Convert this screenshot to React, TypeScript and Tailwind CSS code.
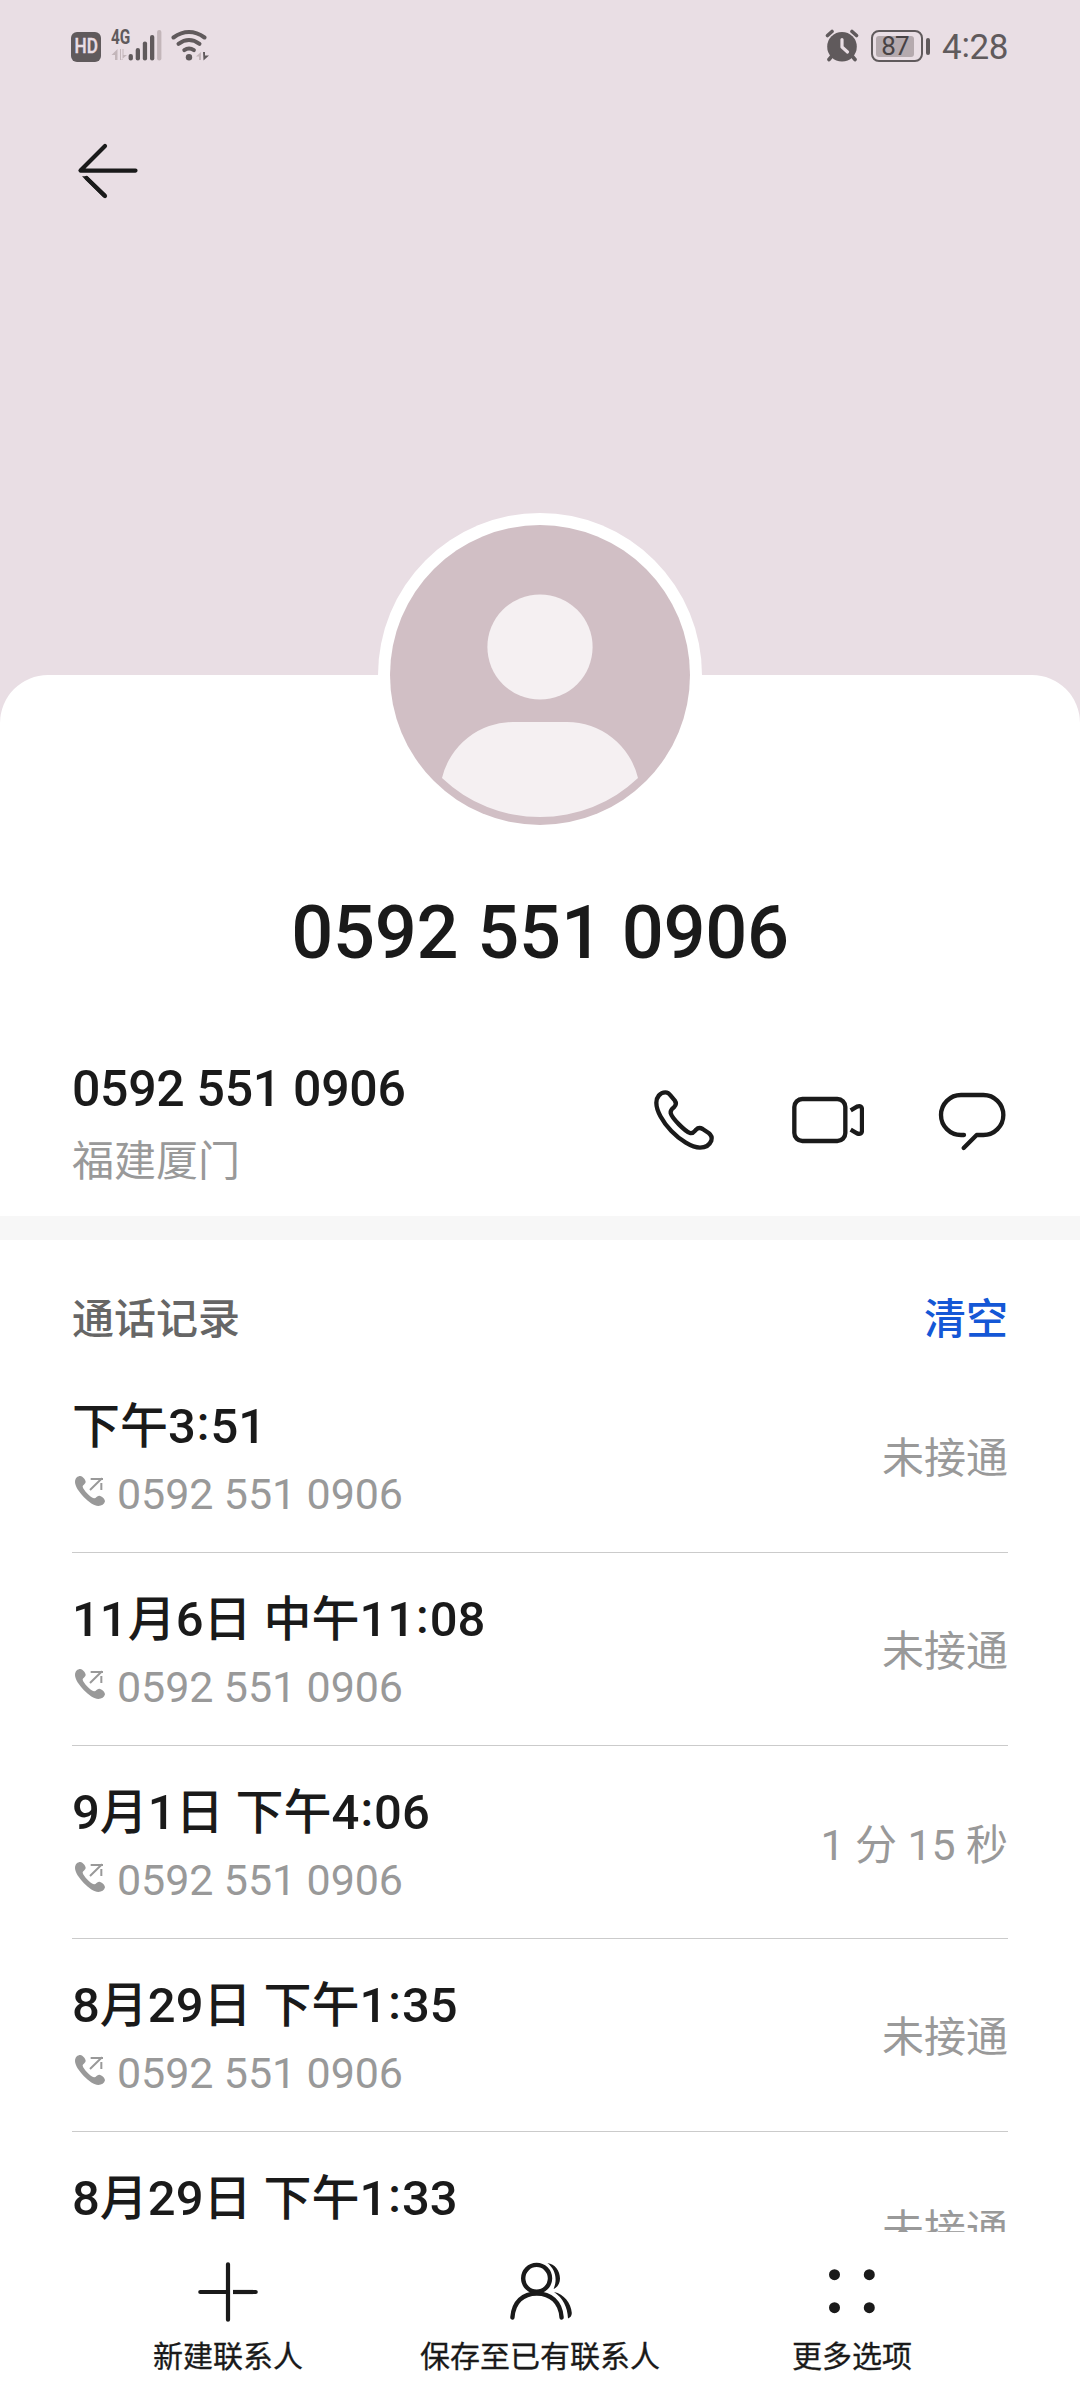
import type { ReactNode } from "react";

const PHONE = "0592 551 0906";

interface CallRecord {
  id: number;
  time: string;
  status: string;
}

const records: CallRecord[] = [
  { id: 1, time: "下午3:51", status: "未接通" },
  { id: 2, time: "11月6日 中午11:08", status: "未接通" },
  { id: 3, time: "9月1日 下午4:06", status: "1 分 15 秒" },
  { id: 4, time: "8月29日 下午1:35", status: "未接通" },
  { id: 5, time: "8月29日 下午1:33", status: "未接通" },
];

// Digits run a little larger than the hanzi, and the colon sits mid-height.
function MixedText({ text }: { text: string }) {
  return (
    <>
      {text.split(/(\d+|:)/).map((part, i) => {
        if (part === ":") {
          return (
            <span key={i} className="relative -top-[3px] px-[1px]">
              :
            </span>
          );
        }
        if (/^\d+$/.test(part)) {
          return (
            <span key={i} className="text-[1.02em]">
              {part}
            </span>
          );
        }
        return <span key={i}>{part}</span>;
      })}
    </>
  );
}

function StatusBar() {
  return (
    <div className="flex h-[92px] items-center justify-between pr-[72px] pl-[71px] text-[#605a5c]">
      <div className="flex items-center">
        <div className="mt-[2px] flex h-[30px] w-[30px] items-center justify-center rounded-[6px] bg-[#605a5c] text-[19.500px] leading-none font-medium text-[#e9dee4]">
          <span className="inline-block scale-x-[0.88] [-webkit-text-stroke:0.4px]">HD</span>
        </div>
        <div className="relative ml-[10px] h-[34px] w-[52px]">
          <span className="absolute top-0 left-0 origin-left scale-x-[0.75] text-[20.500px] leading-[17px] font-bold">
            4G
          </span>
          <svg className="absolute inset-0" width="52" height="34" viewBox="0 0 52 34">
            <path d="M0.500 26 6.500 20v11H4V26zM9 20h2.500v11H9zM10 20v11l6-5h-3.500v-6z" fill="#c3b6ba" />
            <g fill="currentColor">
              <rect x="17.600" y="25" width="4.300" height="6.500" rx="2.100" />
              <rect x="24.700" y="19" width="4.300" height="12.500" rx="2.100" />
              <rect x="31.800" y="12.500" width="4.300" height="19" rx="2.100" />
              <rect x="39" y="6" width="4.300" height="25.500" rx="2.100" />
            </g>
            <rect x="46.100" y="1" width="4.300" height="30.500" rx="2.100" fill="#c3b6ba" />
          </svg>
        </div>
        <svg className="ml-[7px]" width="42" height="34" viewBox="0 0 42 34" fill="none">
          <g stroke="currentColor" strokeWidth="4" strokeLinecap="round">
            <path d="M3.500 8.500Q19 -2.500 34.500 8.500" />
            <path d="M8.500 14.800Q19 7.200 29.500 14.800" />
            <path d="M14.300 21.200Q19 17.800 23.900 21.200" />
          </g>
          <circle cx="19" cy="28.300" r="3.200" fill="currentColor" />
          <path d="M26 27.500 31 23v8h-2v-3.500z" fill="#c3b6ba" />
          <path d="M33 23h2v3.500h4L33.500 31.500z" fill="currentColor" />
        </svg>
      </div>
      <div className="flex items-center">
        <svg width="34" height="34" viewBox="0 0 34 34" fill="none">
          <circle cx="17" cy="17.700" r="14.800" fill="currentColor" />
          <path
            d="M2.500 6.500 7 2.500M31.500 6.500 27 2.500M6.500 27.500 4 30.500M27.500 27.500 30 30.500"
            stroke="currentColor"
            strokeWidth="3.600"
            strokeLinecap="round"
          />
          <path
            d="M17 10.500v7.500l5.500 5"
            stroke="#e9dee4"
            strokeWidth="3.200"
            strokeLinecap="round"
            strokeLinejoin="round"
          />
        </svg>
        <div className="ml-[12px] flex h-[32px] w-[52px] items-center rounded-[8px] border-[2.500px] border-current p-[3px]">
          <div className="flex h-[21px] w-[38px] items-center justify-center rounded-[3px] bg-[#b5aaae] text-[26px] leading-none tracking-[-0.8px] text-[#474244]">
            87
          </div>
        </div>
        <div className="ml-[3px] h-[17px] w-[4px] rounded-full bg-current" />
        <span className="mt-[2px] ml-[12px] text-[35px] leading-none tracking-[-0.4px]">
          4<span className="relative -top-[2px]">:</span>28
        </span>
      </div>
    </div>
  );
}

function Avatar() {
  return (
    <div className="absolute -top-[162px] left-1/2 -translate-x-1/2 rounded-full bg-white p-[12px]">
      <svg width="300" height="300" viewBox="0 0 300 300">
        <circle cx="150" cy="150" r="150" fill="#d1bfc5" />
        <circle cx="150" cy="122" r="52.600" fill="#f5f0f2" />
        <path d="M123 197H177A73 73 0 0 1 248 253A142.300 142.300 0 0 1 52 253A73 73 0 0 1 123 197Z" fill="#f5f0f2" />
      </svg>
    </div>
  );
}

function ActionIcon({ viewBox, children }: { viewBox: string; children: ReactNode }) {
  return (
    <svg
      width="72"
      height="72"
      viewBox={viewBox}
      fill="none"
      stroke="#1a1a1a"
      strokeWidth="13"
      strokeLinejoin="round"
    >
      {children}
    </svg>
  );
}

function OutgoingIcon() {
  return (
    <svg width="36" height="36" viewBox="66 279 108 108" fill="none">
      <path
        d="M75 306C75 294 83 288 91 288C97 288 106 298 107 305C107 312 98 314 98 320C100 330 122 352 132 355C138 356 141 346 148 347C155 348 165 356 165 364C163 373 155 378 145 378C122 378 75 330 75 306Z"
        fill="#999"
      />
      <path d="M120 330 156 295M122 297H159M154 309V330" stroke="#999" strokeWidth="6" />
    </svg>
  );
}

function CallRow({ record }: { record: CallRecord }) {
  return (
    <li className="flex h-[193px] items-center justify-between border-b border-[#cbcbcb]">
      <div>
        <p className="mt-[5px] h-[65px] text-[48px] leading-[68px] font-medium whitespace-pre text-[#1a1a1a]">
          <MixedText text={record.time} />
        </p>
        <div className="flex h-[66px] items-center gap-[9px]">
          <OutgoingIcon />
          <span className="pt-[5px] text-[43px] leading-[66px] tracking-[-0.1px] text-[#999]">{PHONE}</span>
        </div>
      </div>
      <span className="pt-[6px] text-[42px] leading-[60px] text-[#999]">
        <MixedText text={record.status} />
      </span>
    </li>
  );
}

function BottomItem({ label, children }: { label: string; children: ReactNode }) {
  return (
    <button type="button" className="flex flex-col items-center pt-[24px]">
      <svg width="72" height="72" viewBox="0 0 72 72" fill="none">
        {children}
      </svg>
      <span className="mt-[7px] text-[30px] leading-[44px] whitespace-nowrap [-webkit-text-stroke:0.3px]">
        {label}
      </span>
    </button>
  );
}

export default function App() {
  return (
    <div className="flex h-[2400px] w-[1080px] flex-col overflow-hidden bg-[#e9dee4] font-['Roboto','Noto_Sans_CJK_SC',sans-serif] text-[#1a1a1a]">
      <header className="h-[675px] shrink-0">
        <StatusBar />
        <button type="button" aria-label="返回" className="mt-[42px] ml-[72px] block">
          <svg width="72" height="72" viewBox="0 0 72 72" fill="none" stroke="#1a1a1a" strokeWidth="4.200">
            <path d="M33 12 8.500 36.600H63.500" strokeLinecap="round" strokeLinejoin="round" />
            <path d="M10 42.300H15.300L34.500 60.600 31.500 63.400Z" fill="#1a1a1a" stroke="none" />
            <path d="M14.500 44 33 62" strokeLinecap="round" />
          </svg>
        </button>
      </header>

      <main className="relative flex h-[1557px] shrink-0 flex-col rounded-t-[48px] bg-white">
        <Avatar />
        <h1 className="mt-[208px] text-center text-[74px] leading-[100px] font-medium tracking-[-0.300px] [word-spacing:1px]">
          {PHONE}
        </h1>

        <section className="mt-[69px] flex h-[164px] items-center justify-between px-[72px]">
          <div className="-mt-[17px]">
            <p className="text-[50px] leading-[72px] font-medium tracking-[-0.300px]">{PHONE}</p>
            <p className="text-[42px] leading-[74px] text-[#999]">福建厦门</p>
          </div>
          <div className="-mt-[28px] flex gap-[72px]">
            <ActionIcon viewBox="84 72 216 216">
              <path d="M109 128C109 112 120 97 136 97C143 97 148 101 152 107L164 121C169 128 168 136 162 142C155 147 151 151 152 159C156 175 195 214 210 219C218 222 222 216 228 209C234 203 241 203 248 207L266 219C274 225 277 232 274 242C268 257 254 263 240 263C215 263 180 240 154 213C128 186 109 152 109 128Z" />
            </ActionIcon>
            <ActionIcon viewBox="516 72 216 216">
              <rect x="523" y="117" width="153" height="126" rx="24" />
              <path d="M692 151 711 140Q726 135 726 149V211Q726 225 711 220L692 209" />
            </ActionIcon>
            <ActionIcon viewBox="948 72 216 216">
              <path
                d="M1032 225H1023A60 60 0 0 1 1023 105H1090A60 60 0 0 1 1090 225H1070L1031 264"
                strokeLinecap="round"
              />
            </ActionIcon>
          </div>
        </section>

        <div className="h-[24px] shrink-0 bg-[#f7f7f7]" />

        <section className="min-h-0 flex-1 overflow-hidden px-[72px]">
          <div className="flex h-[120px] items-end justify-between text-[42px] leading-[60px] font-medium">
            <h2 className="mb-[10px] text-[#666]">通话记录</h2>
            <button type="button" className="mb-[10px] text-[#1457d6]">
              清空
            </button>
          </div>
          <ul>
            {records.map((record) => (
              <CallRow key={record.id} record={record} />
            ))}
          </ul>
        </section>
      </main>

      <nav className="grid h-[168px] shrink-0 grid-cols-3 bg-white px-[72px]">
        <BottomItem label="新建联系人">
          <g stroke="#1a1a1a" strokeWidth="4.200">
            <path d="M36 8.300V63.700M8.300 36H36" strokeLinecap="round" />
            <path d="M41 36H61" />
            <path d="M61 36H63.700" strokeLinecap="round" />
          </g>
        </BottomItem>
        <BottomItem label="保存至已有联系人">
          <g stroke="#1a1a1a" strokeWidth="4.400">
            <circle cx="32.600" cy="22.300" r="13.400" />
            <path d="M8.400 61.500C9.500 46 19 37.500 32.800 37.500S56.500 46 57.600 61.500" strokeLinecap="round" />
          </g>
          <path
            d="M43.400 7C51 8 56 15 56 22.500C56 27 54 31 49.500 33C54 23 51 13 43.400 7Z"
            fill="#1a1a1a"
          />
          <path
            d="M50 36C60 38 67 47 67.800 57Q67.800 61 64 62.500C63.500 51 59 42 50 36Z"
            fill="#1a1a1a"
          />
        </BottomItem>
        <BottomItem label="更多选项">
          <g fill="#1a1a1a">
            <circle cx="18.500" cy="18.700" r="5.500" />
            <circle cx="53.300" cy="18.700" r="5.500" />
            <circle cx="18.500" cy="51.700" r="5.500" />
            <circle cx="53.300" cy="51.700" r="5.500" />
          </g>
        </BottomItem>
      </nav>
    </div>
  );
}
